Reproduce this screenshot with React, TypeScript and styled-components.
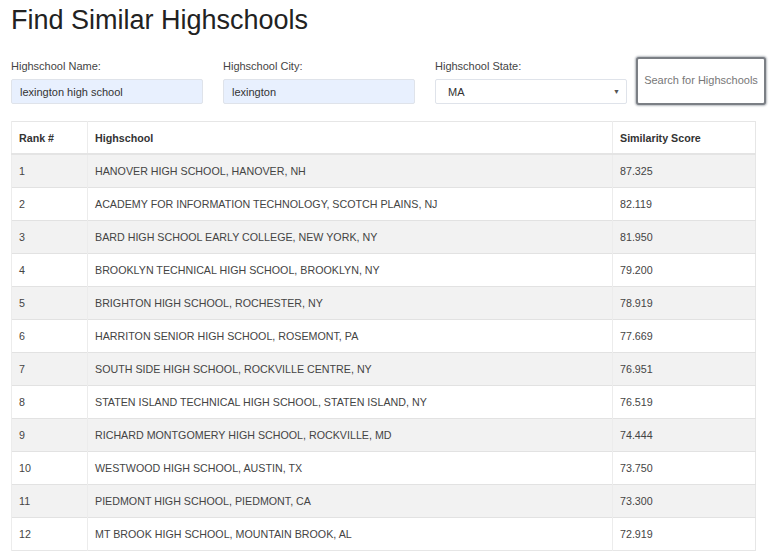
import styled, { createGlobalStyle } from "styled-components";

const GlobalStyle = createGlobalStyle`
  body {
    margin: 0;
    background: #fff;
    font-family: "Liberation Sans", Arial, sans-serif;
    color: #333;
  }
`;

const Page = styled.div`
  padding: 0 10px 0 11px;
`;

const Title = styled.h1`
  margin: 0;
  padding-top: 5px;
  font-size: 27px;
  font-weight: 400;
  line-height: 30px;
  color: #222;
`;

const Form = styled.div`
  display: flex;
  align-items: flex-end;
  margin-top: 22px;
`;

const Field = styled.div`
  display: flex;
  flex-direction: column;
  flex-shrink: 0;
  width: 192px;
  margin-right: 20px;
  &:nth-child(3) {
    margin-right: 9px;
  }
`;

const Label = styled.label`
  font-size: 11px;
  line-height: 13px;
  color: #444;
  margin-bottom: 6px;
`;

const Input = styled.input<{ $filled?: boolean }>`
  box-sizing: border-box;
  height: 25px;
  width: 100%;
  padding: 0 8px;
  font-family: inherit;
  font-size: 11px;
  color: #333;
  background: ${(p) => (p.$filled ? "#e8f0fe" : "#fff")};
  border: 1px solid #dfe3ea;
  border-radius: 2px;
  outline: none;
`;

const SelectBox = styled.div`
  box-sizing: border-box;
  height: 25px;
  display: flex;
  align-items: center;
  justify-content: space-between;
  padding: 0 6px 0 12px;
  font-size: 11px;
  color: #333;
  background: #fff;
  border: 1px solid #dfe3ea;
  border-radius: 2px;
`;

const Caret = styled.span`
  font-size: 7px;
  color: #555;
`;

const SearchButton = styled.button`
  box-sizing: border-box;
  flex-shrink: 0;
  width: 130px;
  height: 48px;
  margin-bottom: -1px;
  padding: 0 0 2px;
  white-space: nowrap;
  font-family: inherit;
  font-size: 11px;
  color: #777;
  background: #fff;
  border: 2px solid #7b7f85;
  border-radius: 3px;
  box-shadow: 0 0 2px 1px #b5b9be;
`;

const Table = styled.table`
  margin-top: 17px;
  width: 745px;
  table-layout: fixed;
  border-collapse: collapse;
  border: 1px solid #e6e6e6;
  font-size: 10.7px;
`;

const Th = styled.th`
  text-align: left;
  font-weight: 700;
  color: #333;
  height: 31px;
  padding: 0 7px;
  border-left: 1px solid #ececec;
  border-bottom: 2px solid #e4e4e4;
`;

const Tr = styled.tr`
  &:nth-child(odd) {
    background: #f2f2f2;
  }
`;

const Td = styled.td`
  height: 32px;
  padding: 0 7px;
  color: #444;
  white-space: nowrap;
  border-left: 1px solid #ececec;
  border-top: 1px solid #e2e2e2;
`;

const rows: [string, string][] = [
  ["HANOVER HIGH SCHOOL, HANOVER, NH", "87.325"],
  ["ACADEMY FOR INFORMATION TECHNOLOGY, SCOTCH PLAINS, NJ", "82.119"],
  ["BARD HIGH SCHOOL EARLY COLLEGE, NEW YORK, NY", "81.950"],
  ["BROOKLYN TECHNICAL HIGH SCHOOL, BROOKLYN, NY", "79.200"],
  ["BRIGHTON HIGH SCHOOL, ROCHESTER, NY", "78.919"],
  ["HARRITON SENIOR HIGH SCHOOL, ROSEMONT, PA", "77.669"],
  ["SOUTH SIDE HIGH SCHOOL, ROCKVILLE CENTRE, NY", "76.951"],
  ["STATEN ISLAND TECHNICAL HIGH SCHOOL, STATEN ISLAND, NY", "76.519"],
  ["RICHARD MONTGOMERY HIGH SCHOOL, ROCKVILLE, MD", "74.444"],
  ["WESTWOOD HIGH SCHOOL, AUSTIN, TX", "73.750"],
  ["PIEDMONT HIGH SCHOOL, PIEDMONT, CA", "73.300"],
  ["MT BROOK HIGH SCHOOL, MOUNTAIN BROOK, AL", "72.919"],
];

export default function App() {
  return (
    <>
      <GlobalStyle />
      <Page>
        <Title>Find Similar Highschools</Title>
        <Form>
          <Field>
            <Label>Highschool Name:</Label>
            <Input $filled defaultValue="lexington high school" />
          </Field>
          <Field>
            <Label>Highschool City:</Label>
            <Input $filled defaultValue="lexington" />
          </Field>
          <Field>
            <Label>Highschool State:</Label>
            <SelectBox>
              <span>MA</span>
              <Caret>▼</Caret>
            </SelectBox>
          </Field>
          <SearchButton>Search for Highschools</SearchButton>
        </Form>
        <Table>
          <colgroup>
            <col style={{ width: 76 }} />
            <col />
            <col style={{ width: 143 }} />
          </colgroup>
          <thead>
            <tr>
              <Th>Rank #</Th>
              <Th>Highschool</Th>
              <Th>Similarity Score</Th>
            </tr>
          </thead>
          <tbody>
            {rows.map(([name, score], i) => (
              <Tr key={name}>
                <Td>{i + 1}</Td>
                <Td>{name}</Td>
                <Td>{score}</Td>
              </Tr>
            ))}
          </tbody>
        </Table>
      </Page>
    </>
  );
}
